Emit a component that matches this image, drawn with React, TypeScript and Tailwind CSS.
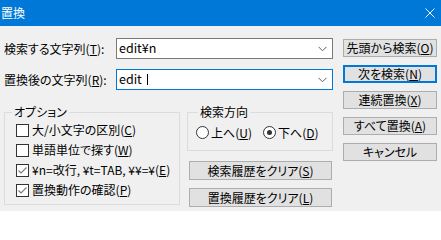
import React from "react";

const font = "font-['Noto_Sans_CJK_JP','Noto_Sans',sans-serif] [font-feature-settings:'palt']";

function U({ c }: { c: string }) {
  return <span className="underline underline-offset-[1px]">{c}</span>;
}

function Chevron() {
  return (
    <svg width="9" height="6" viewBox="0 0 9 6" className="shrink-0">
      <path d="M0.5 0.8 L4.5 4.8 L8.5 0.8" fill="none" stroke="#606060" strokeWidth="1" />
    </svg>
  );
}

function Combo({ focused, children }: { focused?: boolean; children: React.ReactNode }) {
  return (
    <div
      className={`flex h-[21px] w-[217px] items-center justify-between bg-white pl-[2px] pr-[5px] ${
        focused ? "border border-[#0078d7]" : "border border-[#7a7a7a]"
      }`}
    >
      <div className="flex items-center text-[12.5px] leading-none text-black">{children}</div>
      <Chevron />
    </div>
  );
}

function Btn({ children, def, tall }: { children: React.ReactNode; def?: boolean; tall?: boolean }) {
  return (
    <div
      className={`flex items-center justify-center bg-[#e1e1e1] text-[12px] leading-none text-black ${
        tall ? "h-[19px]" : "h-[18px]"
      } ${def ? "border-2 border-[#0078d7]" : "border border-[#adadad]"}`}
    >
      {children}
    </div>
  );
}

function Check({ checked }: { checked?: boolean }) {
  return (
    <div className="flex h-[13px] w-[13px] shrink-0 items-center justify-center border border-[#333333] bg-white">
      {checked && (
        <svg width="11" height="11" viewBox="0 0 11 11">
          <path d="M1.5 5.5 L4 8 L9.5 2.5" fill="none" stroke="#7a7a7a" strokeWidth="1.1" />
        </svg>
      )}
    </div>
  );
}

function Radio({ checked }: { checked?: boolean }) {
  return (
    <div className="flex h-[13px] w-[13px] shrink-0 items-center justify-center rounded-full border border-[#333333] bg-white">
      {checked && <div className="h-[5px] w-[5px] rounded-full bg-[#333333]" />}
    </div>
  );
}

export default function App() {
  return (
    <div className={`h-[211px] w-[441px] overflow-hidden bg-[#f0f0f0] text-black ${font}`}>
      <div className="flex h-[26px] items-center justify-between bg-[#0078d7] pl-[1px] pr-[6px]">
        <span className="text-[12px] leading-none text-white">置換</span>
        <svg width="10" height="10" viewBox="0 0 10 10">
          <path d="M0.5 0.5 L9.5 9.5 M9.5 0.5 L0.5 9.5" stroke="white" strokeWidth="1" />
        </svg>
      </div>
      <div className="flex pl-[4px] pt-[12px]">
        <div className="flex w-[329px] flex-col">
          <div className="flex items-center">
            <div className="w-[112px] text-[12px] leading-none">
              検索する文字列(<U c="T" />):
            </div>
            <Combo>edit¥n</Combo>
          </div>
          <div className="mt-[10px] flex items-center">
            <div className="w-[112px] text-[12px] leading-none">
              置換後の文字列(<U c="R" />):
            </div>
            <Combo focused>
              <span className="whitespace-pre">edit </span>
              <span className="ml-[2px] inline-block h-[11px] w-[1px] bg-black" />
            </Combo>
          </div>
          <div className="mt-[14px] flex">
            <fieldset className="h-[101px] w-[176px] border border-[#dcdcdc]">
              <legend className="ml-[7px] px-[2px] text-[12px] leading-[16px]">オプション</legend>
              <div className="flex flex-col pl-[11px] text-[12px] leading-none">
                <div className="flex h-[20px] items-center gap-[3px]">
                  <Check />
                  <span>
                    大/小文字の区別(<U c="C" />)
                  </span>
                </div>
                <div className="flex h-[20px] items-center gap-[3px]">
                  <Check />
                  <span>
                    単語単位で探す(<U c="W" />)
                  </span>
                </div>
                <div className="flex h-[20px] items-center gap-[3px]">
                  <Check checked />
                  <span>
                    ¥n=改行, ¥t=TAB, ¥¥=¥(<U c="E" />)
                  </span>
                </div>
                <div className="flex h-[20px] items-center gap-[3px]">
                  <Check checked />
                  <span>
                    置換動作の確認(<U c="P" />)
                  </span>
                </div>
              </div>
            </fieldset>
            <div className="ml-[7px] flex w-[146px] flex-col">
              <fieldset className="h-[47px] border border-[#dcdcdc]">
                <legend className="ml-[10px] px-[2px] text-[12px] leading-[16px]">検索方向</legend>
                <div className="flex h-[25px] items-center pl-[8px] text-[12px] leading-none">
                  <div className="flex items-center gap-[2px]">
                    <Radio />
                    <span>
                      上へ(<U c="U" />)
                    </span>
                  </div>
                  <div className="ml-[11px] flex items-center gap-[2px]">
                    <Radio checked />
                    <span>
                      下へ(<U c="D" />)
                    </span>
                  </div>
                </div>
              </fieldset>
              <div className="ml-[2px] mr-[1px] mt-[10px] flex flex-col gap-[8px]">
                <Btn tall>
                  検索履歴をクリア(<U c="S" />)
                </Btn>
                <Btn tall>
                  置換履歴をクリア(<U c="L" />)
                </Btn>
              </div>
            </div>
          </div>
        </div>
        <div className="ml-[10px] flex w-[94px] flex-col gap-[8px] pt-[1px]">
          <Btn>
            先頭から検索(<U c="O" />)
          </Btn>
          <Btn def>
            次を検索(<U c="N" />)
          </Btn>
          <Btn>
            連続置換(<U c="X" />)
          </Btn>
          <Btn>
            すべて置換(<U c="A" />)
          </Btn>
          <Btn>キャンセル</Btn>
        </div>
      </div>
    </div>
  );
}
